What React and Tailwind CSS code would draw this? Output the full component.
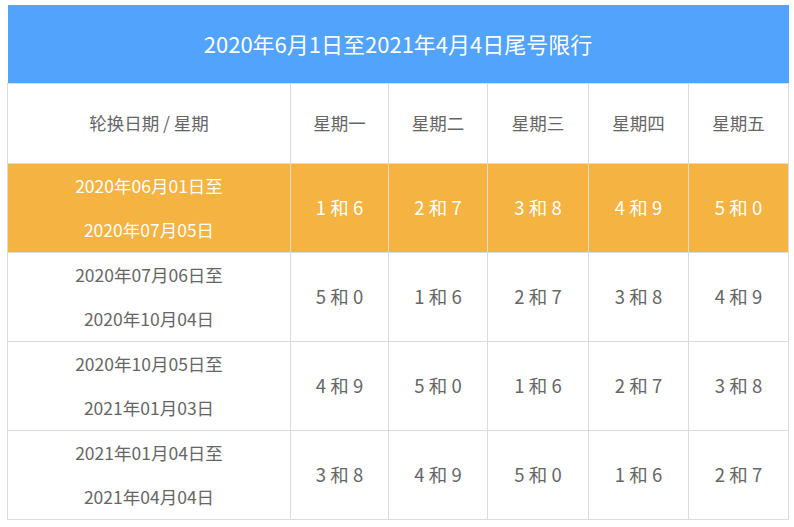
import React from 'react';

const days = ['星期一', '星期二', '星期三', '星期四', '星期五'];

const rows = [
  { from: '2020年06月01日至', to: '2020年07月05日', nums: ['1 和 6', '2 和 7', '3 和 8', '4 和 9', '5 和 0'], active: true },
  { from: '2020年07月06日至', to: '2020年10月04日', nums: ['5 和 0', '1 和 6', '2 和 7', '3 和 8', '4 和 9'] },
  { from: '2020年10月05日至', to: '2021年01月03日', nums: ['4 和 9', '5 和 0', '1 和 6', '2 和 7', '3 和 8'] },
  { from: '2021年01月04日至', to: '2021年04月04日', nums: ['3 和 8', '4 和 9', '5 和 0', '1 和 6', '2 和 7'] },
];

export default function App() {
  return (
    <div className="min-h-[527px] bg-white pl-[7px] pt-[5px] font-['Noto_Sans_CJK_SC','Noto_Sans',sans-serif]">
      <table className="w-[781px] table-fixed border-collapse text-center">
        <colgroup>
          <col className="w-[283px]" />
          <col className="w-[98px]" />
          <col className="w-[99px]" />
          <col className="w-[101px]" />
          <col className="w-[100px]" />
          <col className="w-[100px]" />
        </colgroup>
        <thead>
          <tr>
            <th colSpan={6} className="h-[78px] bg-[#52a3fc] text-[22px] font-normal text-white">
              2020年6月1日至2021年4月4日尾号限行
            </th>
          </tr>
          <tr className="h-[80px] text-[17.5px] font-normal text-[#666]">
            <th className="border border-[#dcdcdc] font-normal">轮换日期 / 星期</th>
            {days.map((d) => (
              <th key={d} className="border border-[#dcdcdc] font-normal">{d}</th>
            ))}
          </tr>
        </thead>
        <tbody>
          {rows.map((r) => (
            <tr
              key={r.from}
              className={r.active ? 'h-[89px] bg-[#f5b342] text-white' : 'h-[89px] text-[#666]'}
            >
              <td className="border border-[#dcdcdc] text-[17.5px] leading-[44px]">
                <div>{r.from}</div>
                <div>{r.to}</div>
              </td>
              {r.nums.map((n, i) => (
                <td key={i} className="border border-[#dcdcdc] text-[18.5px]">{n}</td>
              ))}
            </tr>
          ))}
        </tbody>
      </table>
    </div>
  );
}
